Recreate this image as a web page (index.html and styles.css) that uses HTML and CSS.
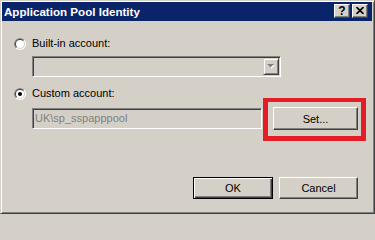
FILE: index.html
```html
<!DOCTYPE html>
<html>
<head>
<meta charset="utf-8">
<title>Application Pool Identity</title>
<link rel="stylesheet" href="styles.css">
</head>
<body>
<div class="window">
  <div class="titlebar">
    <span class="title">Application Pool Identity</span>
    <div class="tbtns">
      <span class="tbtn help">?</span>
      <span class="tbtn close"><svg width="8" height="7" viewBox="0 0 8 7"><path d="M0.5 0 L7.5 7 M7.5 0 L0.5 7" stroke="#000" stroke-width="1.6" fill="none"/></svg></span>
    </div>
  </div>
  <div class="content">
    <div class="radio-row">
      <svg class="radio" width="12" height="12" viewBox="0 0 12 12">
        <circle cx="6" cy="6" r="6" fill="#fff"/>
        <path d="M1.757 10.243 A6 6 0 0 1 10.243 1.757 Z" fill="#808080"/>
        <circle cx="6" cy="6" r="5" fill="#D4D0C8"/>
        <path d="M2.464 9.536 A5 5 0 0 1 9.536 2.464 Z" fill="#404040"/>
        <circle cx="6" cy="6" r="4" fill="#fff"/>
      </svg>
      <span>Built-in account:</span>
    </div>
    <div class="combo">
      <span class="combo-btn"><svg width="8" height="5" viewBox="0 0 8 5"><path d="M1 1 H8 L4.5 4.5 Z" fill="#fff"/><path d="M0 0 H7 L3.5 3.5 Z" fill="#808080"/></svg></span>
    </div>
    <div class="radio-row r2">
      <svg class="radio" width="12" height="12" viewBox="0 0 12 12">
        <circle cx="6" cy="6" r="6" fill="#fff"/>
        <path d="M1.757 10.243 A6 6 0 0 1 10.243 1.757 Z" fill="#808080"/>
        <circle cx="6" cy="6" r="5" fill="#D4D0C8"/>
        <path d="M2.464 9.536 A5 5 0 0 1 9.536 2.464 Z" fill="#404040"/>
        <circle cx="6" cy="6" r="4" fill="#fff"/>
        <circle cx="6" cy="6" r="2" fill="#000"/>
      </svg>
      <span>Custom account:</span>
    </div>
    <div class="custom-row">
      <div class="textbox">UK\sp_sspapppool</div>
      <div class="set-wrap">
        <button class="btn set">Set...</button>
        <span class="highlight"></span>
      </div>
    </div>
    <div class="actions">
      <button class="btn ok">OK</button>
      <button class="btn cancel">Cancel</button>
    </div>
  </div>
</div>
</body>
</html>
```
FILE: styles.css
```css
html, body {
  margin: 0;
  background: #D4D0C8;
  font-family: "Liberation Sans", Arial, sans-serif;
  font-size: 11px;
  color: #000;
}

.window {
  box-sizing: border-box;
  width: 375px;
  height: 214px;
  background: #D4D0C8;
  border: 1px solid;
  border-color: #D4D0C8 #404040 #404040 #D4D0C8;
  box-shadow: inset 1px 1px #fff, inset -1px -1px #808080;
  padding: 1px 2px 1px 1px;
  display: flex;
  flex-direction: column;
}

.titlebar {
  height: 19px;
  flex: none;
  background: #0A246A;
  color: #fff;
  display: flex;
  justify-content: space-between;
  align-items: flex-start;
  padding: 0 4px 0 2px;
}

.title {
  font-weight: bold;
  font-size: 11.6px;
  line-height: 19px;
}

.tbtns {
  display: flex;
  gap: 2px;
  margin-top: 2px;
}

.tbtn {
  box-sizing: border-box;
  width: 16px;
  height: 14px;
  background: #D4D0C8;
  border: 1px solid;
  border-color: #fff #404040 #404040 #fff;
  box-shadow: inset -1px -1px #808080;
  display: flex;
  align-items: center;
  justify-content: center;
  color: #000;
  font-weight: bold;
  font-size: 12px;
  line-height: 12px;
}

.tbtn.help {
  padding-bottom: 1px;
}

.tbtn.close svg {
  display: block;
  margin-bottom: 1px;
}

.content {
  flex: 1;
  display: flex;
  flex-direction: column;
  align-items: flex-start;
  padding: 16px 14px 0 12px;
}

.radio-row {
  display: flex;
  align-items: center;
  gap: 6px;
  height: 13px;
  line-height: 13px;
}

.radio {
  display: block;
  flex: none;
}

.r2 {
  margin-top: 10px;
}

.combo {
  box-sizing: border-box;
  width: 249px;
  height: 21px;
  margin: 6px 0 0 18px;
  border: 1px solid;
  border-color: #808080 #fff #fff #808080;
  box-shadow: inset 1px 1px #404040, inset -1px -1px #D4D0C8;
  padding: 1px;
  display: flex;
  justify-content: flex-end;
}

.combo-btn {
  box-sizing: border-box;
  width: 16px;
  height: 17px;
  background: #D4D0C8;
  border: 1px solid;
  border-color: #D4D0C8 #404040 #404040 #D4D0C8;
  box-shadow: inset 1px 1px #fff, inset -1px -1px #808080;
  display: flex;
  align-items: center;
  justify-content: center;
}

.combo-btn svg {
  display: block;
}

.custom-row {
  display: flex;
  align-items: flex-start;
  gap: 11px;
  margin: 7px 0 0 18px;
}

.textbox {
  box-sizing: border-box;
  width: 230px;
  height: 21px;
  margin-top: 1px;
  border: 1px solid;
  border-color: #808080 #fff #fff #808080;
  box-shadow: inset 1px 1px #404040, inset -1px -1px #D4D0C8;
  padding: 0 0 0 2px;
  line-height: 19px;
  color: #808080;
  white-space: nowrap;
}

.set-wrap {
  position: relative;
}

.btn {
  box-sizing: border-box;
  display: block;
  margin: 0;
  padding: 0;
  background: #D4D0C8;
  border: 1px solid;
  border-color: #fff #404040 #404040 #fff;
  box-shadow: inset -1px -1px #808080;
  font-family: "Liberation Sans", Arial, sans-serif;
  font-size: 11px;
  color: #000;
}

.set {
  width: 85px;
  height: 23px;
}

.highlight {
  position: absolute;
  top: -9px;
  left: -10px;
  right: -8px;
  bottom: -11px;
  border: 5px solid #E31D27;
  border-top-width: 4px;
  pointer-events: none;
}

.actions {
  align-self: flex-end;
  display: flex;
  gap: 6px;
  margin-top: 47px;
}

.ok {
  width: 80px;
  height: 22px;
  border: 1px solid #000;
  box-shadow: inset 1px 1px #fff, inset -1px -1px #404040, inset -2px -2px #808080;
}

.cancel {
  width: 79px;
  height: 22px;
}
```
